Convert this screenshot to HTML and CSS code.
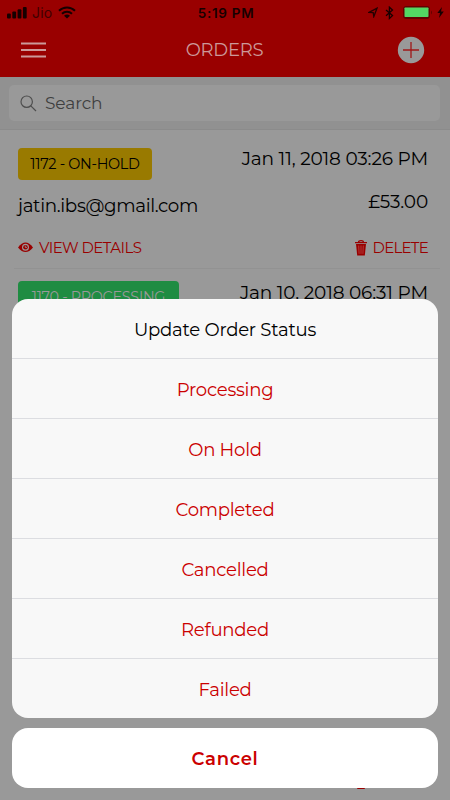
FILE: index.html
```html
<!DOCTYPE html>
<html lang="en">
<head>
<meta charset="utf-8">
<title>Orders</title>
<link rel="stylesheet" href="styles.css">
</head>
<body>
<div class="screen">
  <header class="header">
    <div class="status">
      <div class="status-side">
        <svg class="signal" width="20" height="13" viewBox="0 0 20 13"><rect x="0" y="7.5" width="3.8" height="5" rx="1"/><rect x="5.3" y="5.5" width="3.8" height="7" rx="1"/><rect x="10.6" y="3.2" width="3.8" height="9.3" rx="1"/><rect x="15.9" y="1" width="3.8" height="11.5" rx="1"/></svg>
        <span class="carrier">Jio</span>
        <svg class="wifi" width="18" height="13" viewBox="0 0 18 13"><g fill="none" stroke="#160000" stroke-width="2"><path d="M1 4.8C5.5.4 12.5.4 17 4.8"/><path d="M4 7.8C6.8 5.1 11.2 5.1 14 7.8"/></g><path d="M6 9.7Q9 7.2 12 9.7L9 12.6Z"/></svg>
      </div>
      <span class="time">5:19 PM</span>
      <div class="status-side status-right">
        <svg class="location" width="10" height="11" viewBox="0 0 10 11"><path d="M1 5.4L9 1.2L5.8 9.6L5.2 5.6Z" fill="none" stroke="#240000" stroke-width="1.3"/></svg>
        <svg class="bluetooth" width="9" height="14" viewBox="0 0 9 14"><path d="M1 4L7.5 9.6L4.4 12.5V1.2L7.5 4.1L1 9.8" fill="none" stroke="#160000" stroke-width="1.3"/></svg>
        <svg class="battery" width="30" height="13" viewBox="0 0 30 13"><rect x=".5" y=".5" width="26" height="12" rx="2.5" fill="#620000" stroke="#620000"/><rect x="1.5" y="1.5" width="24" height="9.5" rx=".7" fill="#53d763"/><path d="M28 4.5q2 2 0 4z" fill="#620000"/></svg>
        <svg class="bolt" width="7" height="11" viewBox="0 0 7 11"><path d="M5 0L.3 6H3L2 11L6.8 4.5H4Z"/></svg>
      </div>
    </div>
    <nav class="nav">
      <svg width="26" height="16" viewBox="0 0 26 16"><path d="M0 1.5H25M0 8H25M0 14.5H25" stroke="#c99" stroke-width="1.8"/></svg>
      <h1 class="title">ORDERS</h1>
      <svg class="add" width="28" height="28" viewBox="0 0 28 28"><circle cx="14" cy="14" r="13.2" fill="#999"/><path d="M6 14H22M14 6V22" stroke="#a01818" stroke-width="1.3"/></svg>
    </nav>
  </header>
  <div class="search-band">
    <div class="search">
      <svg class="lens" width="17" height="17" viewBox="0 0 17 17"><g fill="none" stroke="#4e4e4e" stroke-width="1.2"><circle cx="6.7" cy="6.7" r="5.7"/><path d="M10.8 10.8L16 16"/></g></svg>
      <span class="search-text">Search</span>
    </div>
  </div>
  <main class="orders">
    <article class="order">
      <div class="line top"><span class="badge hold">1172 - ON-HOLD</span><time class="date">Jan 11, 2018 03:26 PM</time></div>
      <div class="line middle"><span class="email">jatin.ibs@gmail.com</span><span class="price">£53.00</span></div>
      <div class="line actions">
        <span class="action"><svg class="eye" width="15" height="11" viewBox="0 0 15 11"><path d="M0 5.5Q7.5-4.5 15 5.5Q7.5 14.5 0 5.5Z" fill="#900"/><circle cx="7.5" cy="5.3" r="3.5" fill="#999"/><circle cx="7.5" cy="5.3" r="2.3" fill="#900"/><path d="M7.3 3.7V5.4H9" fill="none" stroke="#999" stroke-width=".8"/></svg><span>VIEW DETAILS</span></span>
        <span class="action remove"><svg class="trash" width="12" height="16" viewBox="0 0 12 16"><path d="M0 2.6H12M3.5 2.5Q3.5.7 6 .7T8.5 2.5" fill="none" stroke="#900" stroke-width="1.3"/><path d="M1 4H11L9.8 15.5H2.2Z" fill="#900"/><path d="M3.7 5.5L4.1 13.8M6 5.5V13.8M8.3 5.5L7.9 13.8" stroke="#b55" stroke-width=".7"/></svg><span>DELETE</span></span>
      </div>
    </article>
    <article class="order">
      <div class="line top"><span class="badge processing">1170 - PROCESSING</span><time class="date">Jan 10, 2018 06:31 PM</time></div>
    </article>
  </main>
  <div class="peek"></div>
  <div class="sheet">
    <div class="menu">
      <div class="item heading">Update Order Status</div>
      <div class="item">Processing</div>
      <div class="item">On Hold</div>
      <div class="item">Completed</div>
      <div class="item">Cancelled</div>
      <div class="item">Refunded</div>
      <div class="item">Failed</div>
    </div>
    <div class="cancel">Cancel</div>
  </div>
</div>
</body>
</html>
```
FILE: styles.css
```css
* { box-sizing: border-box; }
body { margin: 0; font-family: Montserrat, Inter, sans-serif; color: #000; }
svg { display: block; flex: none; }
.screen { position: relative; width: 450px; height: 800px; overflow: hidden; background: #999; white-space: nowrap; }
.header { height: 77px; background: #900; }
.status { height: 25px; display: grid; grid-template-columns: 1fr auto 1fr; align-items: center; padding: 0 6px 0 7px; font-family: Inter, sans-serif; fill: #160000; }
.status-side { display: flex; align-items: center; }
.status-right { justify-content: flex-end; }
.carrier { margin-left: 5px; width: 19px; font-size: 14px; letter-spacing: .2px; color: #400000; }
.wifi { margin-left: 7px; }
.time { margin-left: 1px; font-size: 13.5px; font-weight: 600; letter-spacing: .7px; color: #160000; }
.bluetooth { margin-left: 7px; }
.battery { margin-left: 9px; }
.bolt { margin-left: 4px; }
.nav { height: 50px; display: grid; grid-template-columns: 1fr auto 1fr; align-items: center; padding: 0 25px 0 21px; }
.add { justify-self: end; }
.title { margin: 0 0 0 3px; font-size: 18px; font-weight: 400; line-height: 24px; letter-spacing: -.25px; color: #c99; }
.search-band { height: 53px; padding: 8px 10px 9px 9px; background: #919191; border-bottom: 1px solid #8b8b8b; }
.search { height: 36px; border-radius: 5px; background: #999; display: flex; align-items: center; gap: 8px; padding-left: 11px; }
.lens { margin-top: 1px; }
.search-text { font-size: 17px; font-weight: 400; letter-spacing: -.1px; color: #3f3f3f; }
.orders { padding: 0 10px 0 14px; }
.order { height: 139px; padding: 17px 12px 0 4px; border-bottom: 1px solid #929292; }
.order + .order { padding-top: 12px; border: 0; }
.line { display: flex; justify-content: space-between; }
.top { height: 33px; }
.badge { height: 32px; border-radius: 4px; display: flex; align-items: center; justify-content: center; font-size: 14.4px; letter-spacing: -.3px; }
.hold { width: 134px; margin-top: 1px; padding-bottom: 1px; background: #997a00; }
.processing { width: 161px; background: #1f8c42; color: #999; }
.date, .price { font-size: 18.5px; line-height: 24px; letter-spacing: -.15px; }
.middle { height: 45px; }
.email { margin-top: 14px; font-size: 18.3px; line-height: 24px; letter-spacing: -.35px; }
.price { margin-top: 10px; }
.actions { margin-top: 12px; height: 22px; align-items: center; }
.action { display: flex; align-items: center; gap: 6px; color: #900; font-size: 15px; line-height: 20px; letter-spacing: -.55px; }
.remove { letter-spacing: -.75px; }
.eye { margin-top: -2px; }
.trash { margin-top: -1px; }
.sheet { position: absolute; left: 12px; right: 12px; top: 299px; }
.menu { height: 419px; border-radius: 16px; background: #f8f8f8; overflow: hidden; }
.item { height: 60px; display: flex; align-items: center; justify-content: center; padding-top: 1px; border-bottom: 1px solid #dcdde1; font-size: 18.1px; letter-spacing: -.25px; color: #cb0000; }
.item:last-child { height: 59px; border: 0; }
.heading { color: #000; }
.cancel { margin-top: 10px; height: 60px; padding-top: 2px; border-radius: 16px; background: #fff; display: flex; align-items: center; justify-content: center; font-size: 18px; font-weight: 600; letter-spacing: .7px; color: #cb0000; }
.peek { position: absolute; left: 357px; top: 786px; width: 8px; height: 3px; border-radius: 1px; background: #900; }
```
